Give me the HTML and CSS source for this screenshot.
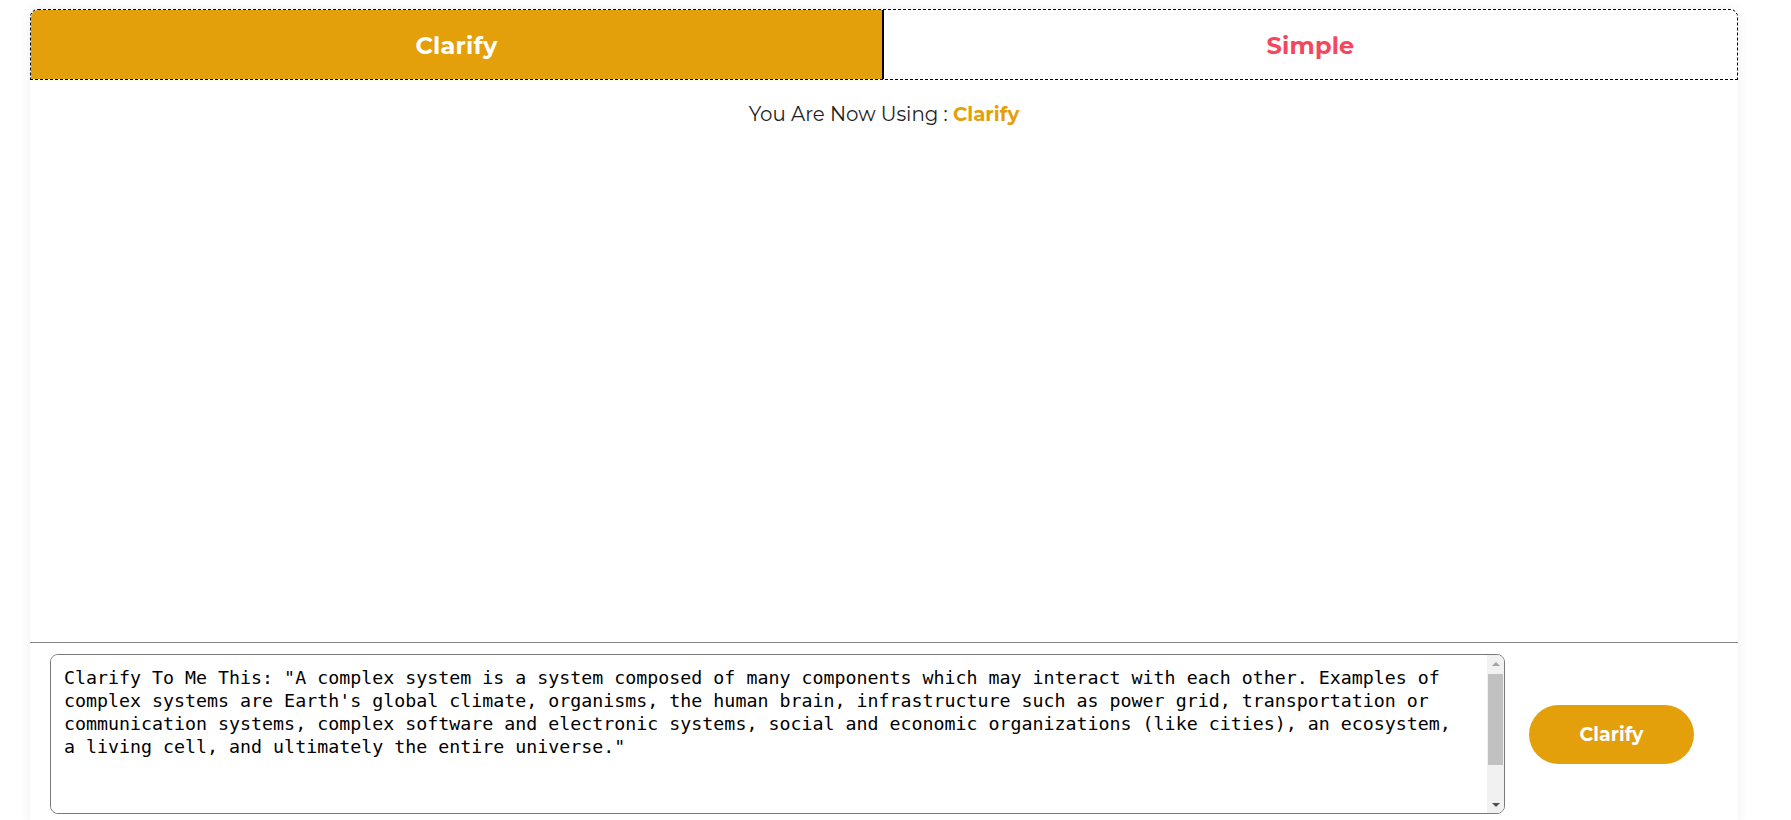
FILE: index.html
```html
<!DOCTYPE html>
<html lang="en">
<head>
<meta charset="utf-8">
<title>Clarify</title>
<link rel="stylesheet" href="styles.css">
</head>
<body>
<div class="page">
  <div class="card">
    <div class="tabs">
      <div class="tab tab-active">Clarify</div>
      <div class="tab tab-simple">Simple</div>
    </div>
    <div class="chat">
      <p class="mode">You Are Now Using : <span class="mode-name">Clarify</span></p>
    </div>
    <div class="composer">
      <div class="field">
        <textarea class="prompt" id="prompt" spellcheck="false">Clarify To Me This: "A complex system is a system composed of many components which may interact with each other. Examples of complex systems are Earth's global climate, organisms, the human brain, infrastructure such as power grid, transportation or communication systems, complex software and electronic systems, social and economic organizations (like cities), an ecosystem, a living cell, and ultimately the entire universe."</textarea>
        <div class="scrollbar" aria-hidden="true">
          <span class="sb-btn"><span class="arrow-up"></span></span>
          <span class="sb-track"><span class="sb-thumb"></span></span>
          <span class="sb-btn"><span class="arrow-down"></span></span>
        </div>
      </div>
      <button class="send" type="button">Clarify</button>
    </div>
  </div>
</div>
<script src="script.js"></script>
</body>
</html>
```

FILE: styles.css
```css
html, body {
  margin: 0;
  padding: 0;
  background: #ffffff;
  overflow: hidden;
}

.page {
  padding: 9px 53px 0 30px;
  font-family: "Montserrat", "Inter", "Open Sans", sans-serif;
}

.card {
  background: #ffffff;
  border-radius: 8px;
  box-shadow: 0 0 12px rgba(0, 0, 0, 0.07);
  display: flex;
  flex-direction: column;
}

.tabs {
  display: grid;
  grid-template-columns: 1fr 1fr;
  height: 71px;
  box-sizing: border-box;
  border: 1px dashed #000000;
  border-radius: 8px 8px 0 0;
  overflow: hidden;
}

.tab {
  display: flex;
  align-items: center;
  justify-content: center;
  font-size: 24px;
  font-weight: 700;
  letter-spacing: 0.2px;
  padding-top: 2px;
}

.tab-active {
  background: #e4a00a;
  color: #ffffff;
  border-right: 2px solid #000000;
}

.tab-simple {
  background: #ffffff;
  color: #f4475e;
}

.chat {
  height: 562px;
  padding-top: 23px;
  box-sizing: border-box;
}

.mode {
  margin: 0;
  text-align: center;
  font-size: 19.8px;
  line-height: 22px;
  font-weight: 400;
  color: #1e1e1e;
}

.mode-name {
  color: #e4a00a;
  font-weight: 700;
}

.composer {
  display: flex;
  align-items: center;
  gap: 24px;
  border-top: 1px solid #858585;
  padding: 11px 44px 14px 20px;
}

.field {
  flex: 1;
  display: flex;
  height: 160px;
  box-sizing: border-box;
  border: 1px solid #7a7a7a;
  border-radius: 8px;
  overflow: hidden;
  background: #ffffff;
}

.prompt {
  flex: 1;
  min-width: 0;
  border: none;
  margin: 0;
  padding: 11px 30px 11px 13px;
  font-family: "DejaVu Sans Mono", "Liberation Mono", monospace;
  font-size: 18.3px;
  line-height: 23px;
  color: #000000;
  caret-color: #000000;
  resize: none;
  overflow: hidden;
  outline: none;
  background: #ffffff;
}

.scrollbar {
  width: 17px;
  flex: none;
  display: flex;
  flex-direction: column;
  background: #f1f1f1;
}

.sb-btn {
  height: 17px;
  display: flex;
  align-items: center;
  justify-content: center;
}

.arrow-up {
  width: 0;
  height: 0;
  border-left: 4px solid transparent;
  border-right: 4px solid transparent;
  border-bottom: 4px solid #a3a3a3;
}

.arrow-down {
  width: 0;
  height: 0;
  border-left: 4px solid transparent;
  border-right: 4px solid transparent;
  border-top: 4px solid #505050;
}

.sb-track {
  flex: 1;
  display: flex;
  flex-direction: column;
  padding: 2px 1px 0 1px;
}

.sb-thumb {
  height: 91px;
  background: #c1c1c1;
}

.send {
  width: 165px;
  height: 59px;
  border: none;
  border-radius: 30px;
  background: #e4a00a;
  color: #ffffff;
  font-family: "Montserrat", "Inter", "Open Sans", sans-serif;
  font-size: 19px;
  font-weight: 700;
  cursor: pointer;
}
```

FILE: script.js
```js
var t = document.getElementById('prompt');
t.focus();
t.setSelectionRange(t.value.length, t.value.length);
t.scrollTop = 0;
```
